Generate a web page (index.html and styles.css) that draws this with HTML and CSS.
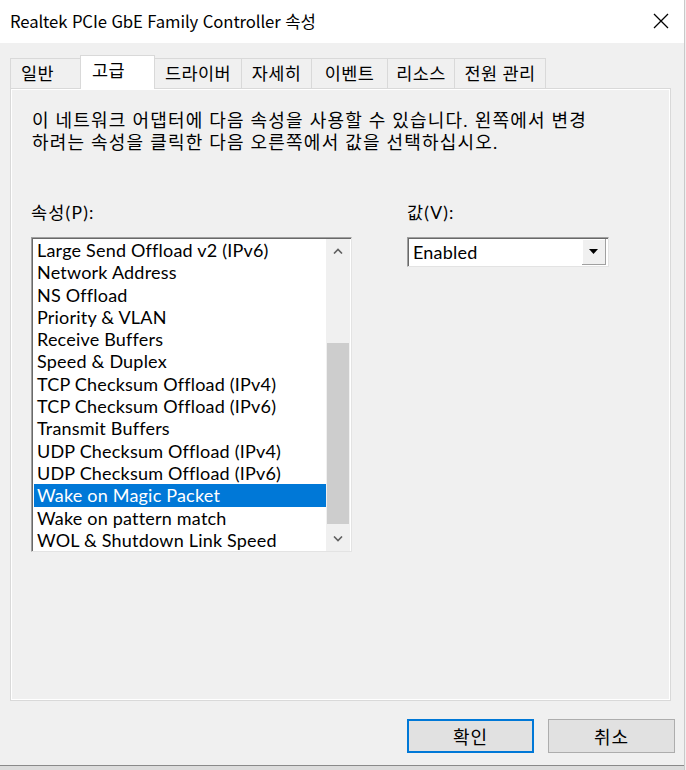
FILE: index.html
```html
<!DOCTYPE html>
<html lang="ko">
<head>
<meta charset="utf-8">
<link rel="stylesheet" href="styles.css">
</head>
<body>
<div class="window">
  <div class="titlebar">
    <span class="title">Realtek PCIe GbE Family Controller 속성</span>
    <svg class="close" width="16" height="16" viewBox="0 0 16 16"><path d="M1 1 L15 15 M15 1 L1 15" stroke="#000" stroke-width="1.3" fill="none"/></svg>
  </div>
  <div class="body">
    <div class="tabs">
      <div class="tab tab-general">일반</div>
      <div class="tab tab-adv active">고급</div>
      <div class="tab tab-driver">드라이버</div>
      <div class="tab tab-detail">자세히</div>
      <div class="tab tab-event">이벤트</div>
      <div class="tab tab-res">리소스</div>
      <div class="tab tab-power">전원 관리</div>
    </div>
    <div class="panel">
      <p class="desc">이 네트워크 어댑터에 다음 속성을 사용할 수 있습니다. 왼쪽에서 변경<br>하려는 속성을 클릭한 다음 오른쪽에서 값을 선택하십시오.</p>
      <div class="fields">
        <div class="field-prop">
          <div class="label">속성(P):</div>
          <div class="listbox">
            <ul class="items">
              <li>Large Send Offload v2 (IPv6)</li>
              <li>Network Address</li>
              <li>NS Offload</li>
              <li>Priority &amp; VLAN</li>
              <li>Receive Buffers</li>
              <li>Speed &amp; Duplex</li>
              <li>TCP Checksum Offload (IPv4)</li>
              <li>TCP Checksum Offload (IPv6)</li>
              <li>Transmit Buffers</li>
              <li>UDP Checksum Offload (IPv4)</li>
              <li>UDP Checksum Offload (IPv6)</li>
              <li class="selected">Wake on Magic Packet</li>
              <li>Wake on pattern match</li>
              <li>WOL &amp; Shutdown Link Speed</li>
            </ul>
            <div class="scrollbar">
              <div class="sb-btn"><svg width="10" height="6" viewBox="0 0 10 6"><path d="M1 5.5 L5 1.5 L9 5.5" stroke="#606060" stroke-width="1.6" fill="none"/></svg></div>
              <div class="sb-track-top"></div>
              <div class="sb-thumb"></div>
              <div class="sb-track-bottom"></div>
              <div class="sb-btn"><svg width="10" height="6" viewBox="0 0 10 6"><path d="M1 0.5 L5 4.5 L9 0.5" stroke="#606060" stroke-width="1.6" fill="none"/></svg></div>
            </div>
          </div>
        </div>
        <div class="field-val">
          <div class="label">값(V):</div>
          <div class="combo">
            <span class="combo-text">Enabled</span>
            <span class="combo-btn"><svg width="9" height="5" viewBox="0 0 9 5"><path d="M0 0 L9 0 L4.5 5 Z" fill="#000"/></svg></span>
          </div>
        </div>
      </div>
    </div>
    <div class="buttons">
      <button class="btn default">확인</button>
      <button class="btn">취소</button>
    </div>
  </div>
  <div class="bottom-edge"></div>
</div>
</body>
</html>
```
FILE: styles.css
```css
* { box-sizing: border-box; }
html, body { margin: 0; padding: 0; }
body {
  width: 686px;
  height: 770px;
  background: #f0f0f0;
  font-family: Lato, "Noto Sans CJK KR", sans-serif;
  color: #000;
  overflow: hidden;
}
.window {
  width: 685px;
  height: 770px;
  border-right: 1px solid #c9c9c9;
  display: flex;
  flex-direction: column;
}
.titlebar {
  height: 43px;
  background: #fff;
  display: flex;
  align-items: center;
  justify-content: space-between;
  padding: 0 15px 2px 10px;
}
.title {
  font-family: "Noto Sans CJK KR", "Noto Sans", sans-serif;
  font-size: 16.7px;
  letter-spacing: -0.1px;
}
.close { display: block; }

.body {
  padding: 12px 10px 0 10px;
  flex: 1;
}
.tabs {
  display: flex;
  align-items: flex-end;
  height: 33px;
  position: relative;
  z-index: 2;
}
.tab {
  height: 30px;
  border: 1px solid #d9d9d9;
  border-bottom: none;
  margin-right: -1px;
  background: #f0f0f0;
  font-size: 17.5px;
  letter-spacing: 0.4px;
  display: flex;
  align-items: center;
  justify-content: center;
  padding-bottom: 2px;
}
.tab.active {
  height: 34px;
  margin-bottom: -1px;
  background: #fff;
  padding-bottom: 6px;
}
.tab-general { width: 71px; justify-content: flex-start; padding-left: 10px; }
.tab-adv { width: 75px; justify-content: flex-start; padding-left: 11px; }
.tab-driver { width: 88px; }
.tab-detail { width: 71px; }
.tab-event { width: 77px; }
.tab-res { width: 68px; }
.tab-power { width: 92px; }

.panel {
  width: 661px;
  height: 613px;
  border: 1px solid #d9d9d9;
  box-shadow: inset 1px 1px 0 #fff, inset -1px -1px 0 #fff;
  background: #f0f0f0;
  padding: 20px 0 0 21px;
}
.desc {
  margin: 0;
  font-size: 18px;
  line-height: 22px;
  letter-spacing: 1.2px;
}
.fields {
  display: flex;
  margin-top: 49px;
}
.label {
  font-size: 17.5px;
  line-height: 22px;
  height: 22px;
  margin-bottom: 13px;
  letter-spacing: 1.2px;
}
.field-prop { width: 321px; margin-left: -1px; }
.field-val { margin-left: 55px; }

.listbox {
  width: 321px;
  height: 315px;
  background: #fff;
  border-top: 1px solid #a0a0a0;
  border-left: 1px solid #a0a0a0;
  border-right: 1px solid #e3e3e3;
  border-bottom: 1px solid #e3e3e3;
  box-shadow: inset 1px 1px 0 #696969;
  padding: 1px 1px 0 1px;
  display: flex;
}
.items {
  list-style: none;
  margin: 0;
  padding: 0 0 0 1px;
  flex: 1;
}
.items li {
  height: 22.3px;
  line-height: 22.3px;
  font-size: 18px;
  letter-spacing: 0.2px;
  padding-left: 3px;
  white-space: nowrap;
}
.items li.selected {
  background: #0078d7;
  color: #fff;
}
.scrollbar {
  width: 24px;
  background: #f0f0f0;
  display: flex;
  flex-direction: column;
  align-items: center;
  height: 312px;
}
.sb-btn {
  height: 24px;
  width: 24px;
  display: flex;
  align-items: center;
  justify-content: center;
}
.sb-track-top { height: 80px; }
.sb-thumb {
  width: 22px;
  height: 181px;
  background: #cdcdcd;
}
.sb-track-bottom { flex: 1; }

.combo {
  width: 202px;
  height: 30px;
  background: #fff;
  border-top: 1px solid #a0a0a0;
  border-left: 1px solid #a0a0a0;
  border-right: 1px solid #e3e3e3;
  border-bottom: 1px solid #e3e3e3;
  box-shadow: inset 1px 1px 0 #696969;
  display: flex;
  align-items: center;
  justify-content: space-between;
  padding: 1px 2px 1px 5px;
}
.combo-text { font-size: 18px; letter-spacing: 0.2px; }
.combo-btn {
  width: 24px;
  height: 26px;
  background: #f0f0f0;
  border-right: 1px solid #a0a0a0;
  border-bottom: 1px solid #a0a0a0;
  box-shadow: inset 1px 1px 0 #fff;
  display: flex;
  align-items: center;
  justify-content: center;
}
.combo-btn svg { display: block; }

.buttons {
  display: flex;
  justify-content: flex-end;
  gap: 14px;
  margin-top: 18px;
  width: 665px;
}
.btn {
  width: 127px;
  height: 34px;
  background: #e1e1e1;
  border: 1px solid #adadad;
  font-family: Lato, "Noto Sans CJK KR", sans-serif;
  font-size: 18px;
  letter-spacing: 1px;
  color: #000;
  padding: 0;
}
.btn.default {
  border: 2px solid #0078d7;
}
.bottom-edge {
  height: 5px;
  border-top: 1px solid #8a8a8a;
  background: #dcdcdc;
}
```
